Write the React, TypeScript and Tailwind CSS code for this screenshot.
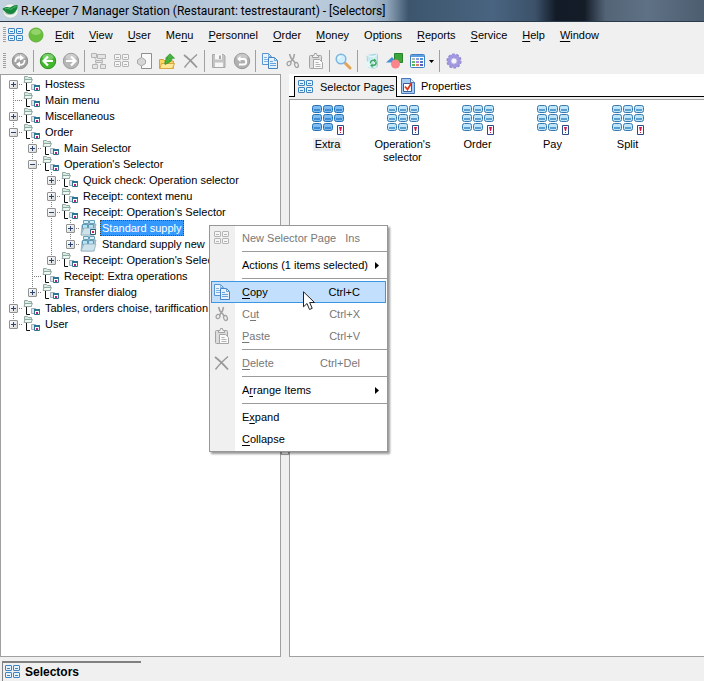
import { Fragment, useState, type ReactNode } from 'react';

type TreeNode = {
  id: string;
  label: string;
  kind?: 'page' | 'pageMarked';
  children?: TreeNode[];
  expandable?: boolean;
};

const tree: TreeNode[] = [
  { id: 'hostess', label: 'Hostess', expandable: true },
  { id: 'main-menu', label: 'Main menu' },
  { id: 'misc', label: 'Miscellaneous', expandable: true },
  {
    id: 'order',
    label: 'Order',
    children: [
      { id: 'main-selector', label: 'Main Selector', expandable: true },
      {
        id: 'op-selector',
        label: "Operation's Selector",
        children: [
          { id: 'quick', label: 'Quick check: Operation selector', expandable: true },
          { id: 'context', label: 'Receipt: context menu', expandable: true },
          {
            id: 'receipt-op',
            label: "Receipt: Operation's Selector",
            children: [
              { id: 'supply', label: 'Standard supply', kind: 'pageMarked', expandable: true },
              { id: 'supply-new', label: 'Standard supply new', kind: 'page', expandable: true },
            ],
          },
          { id: 'receipt-op-2', label: "Receipt: Operation's Selector", expandable: true },
        ],
      },
      { id: 'extra', label: 'Receipt: Extra operations' },
      { id: 'transfer', label: 'Transfer dialog', expandable: true },
    ],
  },
  { id: 'tables', label: 'Tables, orders choise, tariffication', expandable: true },
  { id: 'user', label: 'User', expandable: true },
];

// "&" marks the access key
const menus = [
  '&Edit', '&View', '&User', 'Me&nu', '&Personnel', '&Order',
  '&Money', 'Op&tions', '&Reports', '&Service', '&Help', '&Window',
];

const pages = ['Extra', "Operation's selector", 'Order', 'Pay', 'Split'];

function Mnemonic({ text }: { text: string }) {
  const at = text.indexOf('&');
  if (at < 0) return <>{text}</>;
  return (
    <>
      {text.slice(0, at)}
      <span className="underline underline-offset-2">{text[at + 1]}</span>
      {text.slice(at + 2)}
    </>
  );
}

/* ---------- icons ---------- */

function SelectorsIcon({ muted = false }: { muted?: boolean }) {
  const stroke = muted ? '#b4b4b4' : '#3f83c1';
  const fill = muted ? '#f6f6f6' : '#e3f3fd';
  return (
    <svg width="16" height="16" viewBox="0 0 16 16" className="shrink-0" aria-hidden="true">
      {[[0, 1], [8, 1], [0, 8], [8, 8]].map(([x, y]) => (
        <g key={`${x}-${y}`}>
          <rect x={x + 0.5} y={y + 0.5} width="6" height="5" rx="0.5" fill={fill} stroke={stroke} />
          <rect x={x + 2} y={y + 3} width="3" height="1" fill={stroke} />
        </g>
      ))}
    </svg>
  );
}

function CopyIcon() {
  return (
    <svg width="16" height="16" viewBox="0 0 16 16" aria-hidden="true">
      <path d="M.5.5h6l3 3v8h-9z" fill="#eaf4fd" stroke="#5b93cf" />
      <path d="M6.5.5v3h3M2 4.500h3M2 6.500h4M2 8.500h4" fill="none" stroke="#7fb0e0" />
      <path d="M6.500 4.500h6l3 3v8h-9z" fill="#e4f1fd" stroke="#4583c6" />
      <path d="M12.500 4.500v3h3M8 8.500h3M8 10.500h6M8 12.500h6" fill="none" stroke="#6aa3dc" />
    </svg>
  );
}

function CutIcon() {
  return (
    <svg width="16" height="16" viewBox="0 0 16 16" fill="none" stroke="#a3a3a3" aria-hidden="true">
      <path d="M4.500 1l1.500 4 4.500 5M9.500 1L8.500 5 5.500 9" strokeWidth="1.600" />
      <ellipse cx="4" cy="10.500" rx="1.800" ry="2.200" transform="rotate(35 4 10.500)" strokeWidth="1.300" />
      <ellipse cx="11.500" cy="12" rx="1.800" ry="2.500" transform="rotate(-20 11.500 12)" strokeWidth="1.300" />
    </svg>
  );
}

function PasteIcon() {
  return (
    <svg width="16" height="16" viewBox="0 0 16 16" aria-hidden="true">
      <rect x="1.500" y="2.500" width="12" height="13" rx="1" fill="#dcdcdc" stroke="#a2a2a2" />
      <path d="M4.500 4.500v-2h1.500l.5-2h2l.5 2h1.500v2z" fill="#f4f4f4" stroke="#a0a0a0" />
      <path d="M5.500 6.500h6l3 3v6h-9z" fill="#fafafa" stroke="#a6a6a6" />
      <path d="M7.500 9.500h3M7.500 11.500h5M7.500 13.500h5" stroke="#b4b4b4" />
    </svg>
  );
}

function DeleteIcon() {
  return (
    <svg width="16" height="16" viewBox="0 0 16 16" fill="none" stroke="#999" aria-hidden="true">
      <path d="M1 2c4 3 9 8 13 12.500" strokeWidth="1.800" />
      <path d="M14 1.500C10 5 5 9.500 1.500 14.500" strokeWidth="1.400" />
    </svg>
  );
}

function RoundIcon({ color, rim, children }: { color: string; rim: string; children: ReactNode }) {
  return (
    <svg width="18" height="18" viewBox="0 0 18 18" fill="none" aria-hidden="true">
      <circle cx="9" cy="9" r="7.700" fill={color} stroke={rim} />
      <ellipse cx="9" cy="5" rx="5.500" ry="3.200" fill="#fff" opacity=".3" />
      {children}
    </svg>
  );
}

function ReloadIcon() {
  return (
    <RoundIcon color="#a2a2a2" rim="#8e8e8e">
      <path d="M4.500 10C4 6.500 6.500 4.500 9.500 5.500M13.500 8c.5 3.500-2 5.500-5 4.500" stroke="#fff" strokeWidth="1.800" />
      <path d="M9 2.800l4 3.200-4 2.500zM9 15.200l-4-3.200 4-2.500z" fill="#fff" />
    </RoundIcon>
  );
}

function BackIcon() {
  return (
    <RoundIcon color="#43b82d" rim="#2f9422">
      <path d="M14 9H5M9 4.500L4.500 9 9 13.500" stroke="#fff" strokeWidth="2.200" />
    </RoundIcon>
  );
}

function ForwardIcon() {
  return (
    <RoundIcon color="#b6b6b6" rim="#9c9c9c">
      <path d="M4 9h9M9 4.500L13.500 9 9 13.500" stroke="#fff" strokeWidth="2.200" />
    </RoundIcon>
  );
}

function UndoIcon() {
  return (
    <RoundIcon color="#b0b0b0" rim="#999">
      <path d="M6 7h4.500a2.500 2.500 0 0 1 0 5.500H6" stroke="#fff" strokeWidth="1.800" />
      <path d="M7.500 4v6L4 7z" fill="#fff" />
    </RoundIcon>
  );
}

function StructureIcon() {
  return (
    <svg width="16" height="16" viewBox="0 0 16 16" fill="#e4e4e4" stroke="#b4b4b4" aria-hidden="true">
      <path d="M.5.5h5v4h-5zM6.500 1.500h8v4h-8z" />
      <path d="M4.500 7.500h7v2h-7zM1.500 11.500h5v4h-5zM9.500 11.500h5v4h-5z" />
      <path d="M3 4.500l3 3M12 5.500l-2 2M6 9.500l-2 2M10 9.500l2 2" fill="none" />
    </svg>
  );
}

function DocumentIcon() {
  return (
    <svg width="16" height="16" viewBox="0 0 16 16" aria-hidden="true">
      <path d="M4.500.5h10v15h-10" fill="#fafafa" stroke="#8f8f8f" />
      <path d="M4.500.5v5M4.500 12v3.500" stroke="#8f8f8f" />
      <path d="M.5 7l4-2.500 4 2.500v3.500l-4 2.500-4-2.500z" fill="#d6d6d6" stroke="#a8a8a8" />
    </svg>
  );
}

function FolderUpIcon() {
  return (
    <svg width="17" height="17" viewBox="0 0 17 17" aria-hidden="true">
      <path d="M.5 15.500V6.500h4l1.500 1.500h8.500v7.500z" fill="#fbd667" stroke="#d9a136" />
      <path d="M1 15.500l1.500-5h13l-2 5z" fill="#ffe796" stroke="#dba640" />
      <path d="M6 11.500c-.5-4 1-6 3-6.300H6.500L11 .8l4.500 4.400H13c0 3.300-3 4.300-7 6.300z" fill="#48b43d" stroke="#2d8c2a" strokeWidth=".7" />
    </svg>
  );
}

function SaveIcon() {
  return (
    <svg width="16" height="16" viewBox="0 0 16 16" aria-hidden="true">
      <path d="M1.500 1.500h11l1.500 1.500v11.500H1.500z" fill="#c4c4c4" stroke="#a8a8a8" />
      <path d="M4 1h7v5.500H4zM4 9.500h8V14H4z" fill="#f6f6f6" />
      <path d="M8 2.500h2V6H8z" fill="#aaa" />
    </svg>
  );
}

function FindIcon() {
  return (
    <svg width="17" height="17" viewBox="0 0 17 17" aria-hidden="true">
      <path d="M10 10l5 5" stroke="#e2a455" strokeWidth="3" strokeLinecap="round" />
      <circle cx="6" cy="6" r="4.800" fill="#d2effc" stroke="#7cb5e2" strokeWidth="1.500" />
      <path d="M3.500 6A2.500 2.500 0 0 1 6 3.500" fill="none" stroke="#fff" />
    </svg>
  );
}

function RecycleIcon() {
  return (
    <svg width="16" height="16" viewBox="0 0 16 16" aria-hidden="true">
      <path d="M3 2.500L13.500 1v12L11 15.500 4 14z" fill="#c9eaf1" stroke="#a5d5df" />
      <path d="M3 2.500l7 1.500 3.500-3M10 4l1 11.500" fill="none" stroke="#eefbfd" />
      <path d="M1 8l6 1v6l-5-1.500z" fill="#e3f6f9" />
      <path d="M6.500 10.500c0-3 2-3.500 4.500-3M12 8.500c.5 3-1 4-4 4" fill="none" stroke="#3ea85e" strokeWidth="1.500" />
      <path d="M10 5.500l2.500 2-2.500 2zM8.500 10.500l-2.500 2 2.500 2z" fill="#3ea85e" />
    </svg>
  );
}

function ShapesIcon() {
  return (
    <svg width="17" height="16" viewBox="0 0 17 16" aria-hidden="true">
      <path d="M0 9.500L6 4l5 5.500z" fill="#4690d8" />
      <path d="M8.500.5h8v9h-8z" fill="#3da53b" stroke="#25852a" />
      <circle cx="9.500" cy="11" r="4.500" fill="#fa858c" />
    </svg>
  );
}

function CalendarIcon() {
  const colors = ['#b5b8ba', '#8c9fdd', '#4c94d8', '#5fbb65', '#a68bdc', '#5b74c7', '#59b45f', '#da7f66', '#575fc0'];
  return (
    <svg width="15" height="14" viewBox="0 0 15 14" aria-hidden="true">
      <rect x=".5" y=".5" width="14" height="13" rx="1" fill="#fff" stroke="#3f7fc4" />
      <path d="M1 1h13v2H1z" fill="#5d9de0" />
      {colors.map((c, i) => (
        <rect key={i} x={2 + (i % 3) * 4} y={4 + Math.floor(i / 3) * 3} width="3" height="2" fill={c} />
      ))}
    </svg>
  );
}

function GearIcon() {
  return (
    <svg width="16" height="16" viewBox="0 0 16 16" fill="none" aria-hidden="true">
      <circle cx="8" cy="8" r="6.600" stroke="#8c83d0" strokeWidth="2" strokeDasharray="2.600 1.547" />
      <circle cx="8" cy="8" r="5" stroke="#9f97df" strokeWidth="3.400" />
      <circle cx="8" cy="8" r="3.200" fill="#f4f3fb" stroke="#8980ce" strokeWidth=".7" />
    </svg>
  );
}

function AppIcon() {
  return (
    <svg width="17" height="17" viewBox="0 0 17 17" aria-hidden="true">
      <ellipse cx="8.500" cy="9" rx="7.700" ry="7.200" fill="#f0f4f0" stroke="#b4c2c4" strokeWidth=".7" />
      <path d="M2 10c2 4 9 4 12 0-3 1.500-9 1.500-12 0z" fill="#a9bdb3" />
      <path d="M.5 7C3 4.500 6 5 8 5.500c2-1.500 5-3 7.500-2.500.5 4-2 8.500-6.500 9-3.500 0-6.500-2-8.500-5z" fill="#16873c" />
      <path d="M3 7c2-1 4-.5 5.500.5C10.500 6 12.500 4.800 14.500 4.500" fill="none" stroke="#4cc36b" />
    </svg>
  );
}

function GroupIcon() {
  return (
    <svg width="18" height="16" viewBox="0 0 18 16" className="shrink-0" aria-hidden="true">
      <path d="M1.500 6.500v-6h3l1 1h3v5z" fill="#d5ebe0" stroke="#93aaa4" />
      <path d="M2 3.500h7.500l-1.500 3H1z" fill="#eef9f2" stroke="#93aaa4" />
      <path d="M3.500 7v7.500H7" fill="none" stroke="#111" />
      <path d="M8.500 8.500h4v5h-4z" fill="#dbe6ee" stroke="#9fb2be" />
      <path d="M11.500 9.500h5v5h-5z" fill="#fff" stroke="#2b7590" />
      <path d="M11 9h6v2h-6z" fill="#2b7590" />
      <path d="M13 12h2v2h-2z" fill="#c21a86" />
    </svg>
  );
}

function PageNodeIcon({ marked }: { marked: boolean }) {
  return (
    <svg width="18" height="16" viewBox="0 0 18 16" className="shrink-0" aria-hidden="true">
      <path d="M1 15L2 5l14-1-2 11z" fill="#a5c2ce" stroke="#8aa5b0" strokeWidth=".7" />
      <path d="M3.500.5h5v3h-5zM9.500.5h5v3h-5z" fill="#d4f1fc" stroke="#6a9fba" />
      <path d="M2.500 4.500h5v4h-5zM8.500 4.500h5v4h-5z" fill="#b5e3f6" stroke="#6499b4" />
      <path d="M1 15l3-7h12l-2 7z" fill="#d3e7ee" fillOpacity=".85" stroke="#8db0be" strokeWidth=".7" />
      {marked && (
        <>
          <path d="M10.500 9.500h5v5h-5z" fill="#fff" stroke="#2b5f7a" />
          <path d="M12 11h2v2h-2z" fill="#c81c5c" />
        </>
      )}
    </svg>
  );
}

function PropertiesIcon() {
  return (
    <svg width="14" height="16" viewBox="0 0 14 16" aria-hidden="true">
      <path d="M.5.5h9l4 4v11H.5z" fill="#a6cbf3" stroke="#4878b8" />
      <path d="M9.500.5v4h4" fill="#e9f3fe" stroke="#4878b8" />
      <path d="M2.500 5.500h8v8h-8z" fill="#fff" stroke="#3b5d91" />
      <path d="M4 8.500l2.500 3 4-6.500" fill="none" stroke="#e0371f" strokeWidth="1.800" />
    </svg>
  );
}

function PageIcon({ active }: { active: boolean }) {
  const cells = [0, 1, 2, 3, 4, 5, 6, 7];
  return (
    <svg width="32" height="32" viewBox="0 0 32 32" aria-hidden="true">
      {cells.map((i) => {
        const x = (i % 3) * 11;
        const y = 1 + Math.floor(i / 3) * 9;
        return (
          <g key={i}>
            <rect x={x + 0.5} y={y + 0.5} width="9" height="7" rx="2" fill={active ? '#7fbcf0' : '#bfe6fb'} stroke={active ? '#2571b5' : '#3779ae'} />
            <rect x={x + 2} y={y + 4} width="6" height="2" fill={active ? '#3c8bd3' : '#5b9fd0'} />
          </g>
        );
      })}
      <path d="M25.500 21.500h6v9h-6z" fill="#fff" stroke="#2c4a86" />
      <path d="M27 23h3l-1 4h-1zM28 28h1v1h-1z" fill="#d3164f" />
    </svg>
  );
}

/* ---------- tree ---------- */

function Guide({ up, down, across }: { up: boolean; down: boolean; across: boolean }) {
  return (
    <svg width="19" height="16" viewBox="0 0 19 16" stroke="#808080" strokeDasharray="1 1" className="block" aria-hidden="true">
      {up && <path d="M9.500 0v8" />}
      {down && <path d="M9.500 8v8" />}
      {across && <path d="M9 8.500h10" />}
    </svg>
  );
}

type BranchProps = {
  nodes: TreeNode[];
  guides: boolean[];
  closed: string[];
  onToggle: (id: string) => void;
};

function Branch({ nodes, guides, closed, onToggle }: BranchProps) {
  return (
    <ul>
      {nodes.map((node, index) => {
        const last = index === nodes.length - 1;
        const open = !!node.children && !closed.includes(node.id);
        const selected = node.id === 'supply';
        return (
          <li key={node.id}>
            <div className="flex h-4 items-center">
              {guides.map((on, i) => (
                <Guide key={i} up={on} down={on} across={false} />
              ))}
              <span className="relative block w-[19px] shrink-0">
                <Guide up={index > 0 || guides.length > 0} down={!last} across />
                {(node.children || node.expandable) && (
                  <button
                    type="button"
                    aria-label={`${open ? 'Collapse' : 'Expand'} ${node.label}`}
                    onClick={() => onToggle(node.id)}
                    className="absolute top-1 left-[5px] flex size-[9px] items-center justify-center rounded-[1px] border border-[#919191] bg-linear-to-br from-white to-[#d8d8d8]"
                  >
                    <svg width="5" height="5" viewBox="0 0 5 5" stroke="#2c4570" aria-hidden="true">
                      <path d="M0 2.500h5" />
                      {!open && <path d="M2.500 0v5" />}
                    </svg>
                  </button>
                )}
              </span>
              {node.kind ? <PageNodeIcon marked={node.kind === 'pageMarked'} /> : <GroupIcon />}
              <span
                className={
                  selected
                    ? 'ml-0.5 h-4 border border-dotted border-[#5a4a30] bg-[#3399ff] px-px leading-[14px] whitespace-nowrap text-white'
                    : 'ml-1 leading-4 whitespace-nowrap'
                }
              >
                {node.label}
              </span>
            </div>
            {open && (
              <Branch nodes={node.children!} guides={[...guides, !last]} closed={closed} onToggle={onToggle} />
            )}
          </li>
        );
      })}
    </ul>
  );
}

/* ---------- bars ---------- */

const toolGroups: { name: string; icon: ReactNode; arrow?: boolean }[][] = [
  [{ name: 'Refresh', icon: <ReloadIcon /> }],
  [
    { name: 'Back', icon: <BackIcon /> },
    { name: 'Forward', icon: <ForwardIcon /> },
  ],
  [
    { name: 'New group', icon: <StructureIcon /> },
    { name: 'New selector page', icon: <SelectorsIcon muted /> },
    { name: 'New item', icon: <DocumentIcon /> },
    { name: 'Up one level', icon: <FolderUpIcon /> },
    { name: 'Delete', icon: <DeleteIcon /> },
  ],
  [
    { name: 'Save', icon: <SaveIcon /> },
    { name: 'Undo', icon: <UndoIcon /> },
  ],
  [
    { name: 'Copy', icon: <CopyIcon /> },
    { name: 'Cut', icon: <CutIcon /> },
    { name: 'Paste', icon: <PasteIcon /> },
  ],
  [{ name: 'Find', icon: <FindIcon /> }],
  [
    { name: 'Show deleted', icon: <RecycleIcon /> },
    { name: 'Shapes', icon: <ShapesIcon /> },
    { name: 'View', icon: <CalendarIcon />, arrow: true },
  ],
  [{ name: 'Settings', icon: <GearIcon /> }],
];

function Grip() {
  return <span className="ml-[3px] h-4 w-[3px] shrink-0 bg-[repeating-linear-gradient(#a0a0a0_0_1px,#f0f0f0_1px_2px)]" />;
}

function Toolbar() {
  return (
    <div className="flex h-[26px] shrink-0 items-center">
      <Grip />
      <div className="ml-0.5 flex items-center">
        {toolGroups.map((group, i) => (
          <Fragment key={group[0].name}>
            {i > 0 && (
              <span className="flex w-[5px] justify-center">
                <span className="h-[22px] w-px bg-[#a0a0a0]" />
              </span>
            )}
            {group.map((tool) => (
              <button
                key={tool.name}
                type="button"
                aria-label={tool.name}
                className="flex h-[22px] min-w-[23px] items-center justify-center"
              >
                {tool.arrow ? (
                  <span className="flex items-center gap-1 pr-[3px] pl-1">
                    {tool.icon}
                    <svg width="5" height="3" viewBox="0 0 5 3" aria-hidden="true">
                      <path d="M0 0h5L2.500 3z" />
                    </svg>
                  </span>
                ) : (
                  tool.icon
                )}
              </button>
            ))}
          </Fragment>
        ))}
      </div>
    </div>
  );
}

/* ---------- context menu ---------- */

type MenuEntry = {
  label: string;
  keys?: string;
  icon?: ReactNode;
  disabled?: boolean;
  submenu?: boolean;
  active?: boolean;
};

const menuSections: MenuEntry[][] = [
  [{ label: 'New Selector Page', keys: 'Ins', icon: <SelectorsIcon muted />, disabled: true }],
  [{ label: 'Actions (1 items selected)', submenu: true }],
  [
    { label: '&Copy', keys: 'Ctrl+C', icon: <CopyIcon />, active: true },
    { label: 'C&ut', keys: 'Ctrl+X', icon: <CutIcon />, disabled: true },
    { label: '&Paste', keys: 'Ctrl+V', icon: <PasteIcon />, disabled: true },
  ],
  [{ label: '&Delete', keys: 'Ctrl+Del', icon: <DeleteIcon />, disabled: true }],
  [{ label: 'A&rrange Items', submenu: true }],
  [{ label: 'E&xpand' }, { label: '&Collapse' }],
];

function ContextMenu() {
  return (
    <div
      role="menu"
      className="absolute top-[225px] left-[209px] w-[179px] border border-[#979797] bg-[linear-gradient(to_right,#f0f0f0_25px,#fff_25px)] p-px shadow-[2px_2px_2px_rgba(0,0,0,0.4)]"
    >
      {menuSections.map((section, i) => (
        <Fragment key={i}>
          {i > 0 && <div role="separator" className="-mr-px ml-[31px] h-[5px] border-y-2 border-white bg-[#9b9b9b]" />}
          {section.map((entry) => (
            <button
              key={entry.label}
              type="button"
              role="menuitem"
              disabled={entry.disabled}
              className={`flex h-[22px] w-full items-center border pr-1 text-left ${
                entry.active ? 'border-[#3c96e4] bg-[#c2e0fd]' : 'border-transparent'
              } ${entry.disabled ? 'text-[#777777]' : 'text-black'}`}
            >
              <span className="flex w-[30px] shrink-0 pl-0.5">{entry.icon}</span>
              <span className="grow whitespace-nowrap">
                <Mnemonic text={entry.label} />
              </span>
              {entry.keys && <span className="mr-[21px]">{entry.keys}</span>}
              {entry.submenu && (
                <svg width="4" height="7" viewBox="0 0 4 7" className="mr-0.5" aria-hidden="true">
                  <path d="M0 0v7l4-3.500z" />
                </svg>
              )}
            </button>
          ))}
        </Fragment>
      ))}
      <svg width="13" height="20" viewBox="0 0 13 20" className="absolute top-[65px] left-[93px]" aria-hidden="true">
        <path d="M.5.800v15l3.500-3.300 2.500 6 2.700-1.200-2.500-5.800h4.800z" fill="#fff" stroke="#222" />
      </svg>
    </div>
  );
}

export default function App() {
  const [closed, setClosed] = useState<string[]>([]);

  const toggle = (id: string) =>
    setClosed((ids) => (ids.includes(id) ? ids.filter((x) => x !== id) : [...ids, id]));

  return (
    <div className="relative flex h-screen flex-col overflow-hidden bg-[#f0f0f0] font-['Liberation_Sans',Arial,sans-serif] text-[11px] text-black">
      <header className="flex h-[22px] shrink-0 items-center gap-0.5 border-b border-[#2b3a4a] bg-[linear-gradient(to_right,#c3d2e0_0%,#a9bfd5_20%,#c3d2e0_38%,#b0c3d5_52%,#8fa5b9_55%,#3d566e_58%,#496480_70%,#3c526a_76%,#121b27_79%,#141c28_83%,#536477_86%,#5f7184_92%,#4c5d70_100%)] pl-0.5">
        <AppIcon />
        <h1 className="font-[Roboto,'Noto_Sans',sans-serif] text-[12px] whitespace-nowrap">
          R-Keeper 7 Manager Station (Restaurant: testrestaurant) - [Selectors]
        </h1>
      </header>

      <nav className="flex h-[26px] shrink-0 items-center">
        <Grip />
        <div className="mr-[11px] ml-0.5 flex items-center gap-1">
          <SelectorsIcon />
          <svg width="16" height="16" viewBox="0 0 16 16" aria-hidden="true">
            <circle cx="8" cy="8" r="7" fill="#6bbf3f" stroke="#5fb034" />
            <ellipse cx="8" cy="5" rx="5" ry="3" fill="#a5dc7c" opacity=".7" />
          </svg>
        </div>
        <div className="flex gap-[15px]">
          {menus.map((menu) => (
            <button key={menu} type="button">
              <Mnemonic text={menu} />
            </button>
          ))}
        </div>
      </nav>

      <Toolbar />

      <main className="flex min-h-0 grow">
        <section className="w-[281px] shrink-0 overflow-hidden border border-[#a0a0a0] bg-white pt-px pl-[3px]">
          <Branch nodes={tree} guides={[]} closed={closed} onToggle={toggle} />
        </section>

        <div className="flex w-2 shrink-0 items-center">
          <div className="h-[178px] w-full border border-[#a0a0a0]" />
        </div>

        <section className="flex min-w-0 grow flex-col">
          <div role="tablist" className="flex h-[23px] shrink-0 items-end bg-white">
            <span className="w-[5px] self-stretch border-b border-black" />
            <button
              type="button"
              role="tab"
              aria-selected="true"
              className="flex h-[21px] w-[103px] items-center gap-1.5 border-x border-t border-black bg-[#f0f0f0] pl-[3px] whitespace-nowrap"
            >
              <SelectorsIcon />
              Selector Pages
            </button>
            <button
              type="button"
              role="tab"
              aria-selected="false"
              className="flex h-[21px] grow items-center gap-1.5 border-b border-black pl-1"
            >
              <PropertiesIcon />
              Properties
            </button>
          </div>
          <div className="mt-0.5 grow border-t border-b border-l border-[#a0a0a0] bg-white">
            <ul className="flex flex-wrap pt-1">
              {pages.map((page, i) => (
                <li key={page} className="w-[75px]">
                  <button type="button" className="flex w-full flex-col items-center px-2">
                    <PageIcon active={i === 0} />
                    <span className={`mt-0.5 px-0.5 text-center leading-[13px] ${i === 0 ? 'bg-[#f0f0f0]' : ''}`}>
                      {page}
                    </span>
                  </button>
                </li>
              ))}
            </ul>
          </div>
        </section>
      </main>

      <footer className="flex h-6 shrink-0 items-end pl-0.5">
        <button
          type="button"
          className="flex h-5 w-[139px] items-center gap-1 border-t-2 border-l border-[#808080] pl-0.5 text-[12px] font-bold"
        >
          <SelectorsIcon />
          Selectors
        </button>
      </footer>

      <ContextMenu />
    </div>
  );
}
